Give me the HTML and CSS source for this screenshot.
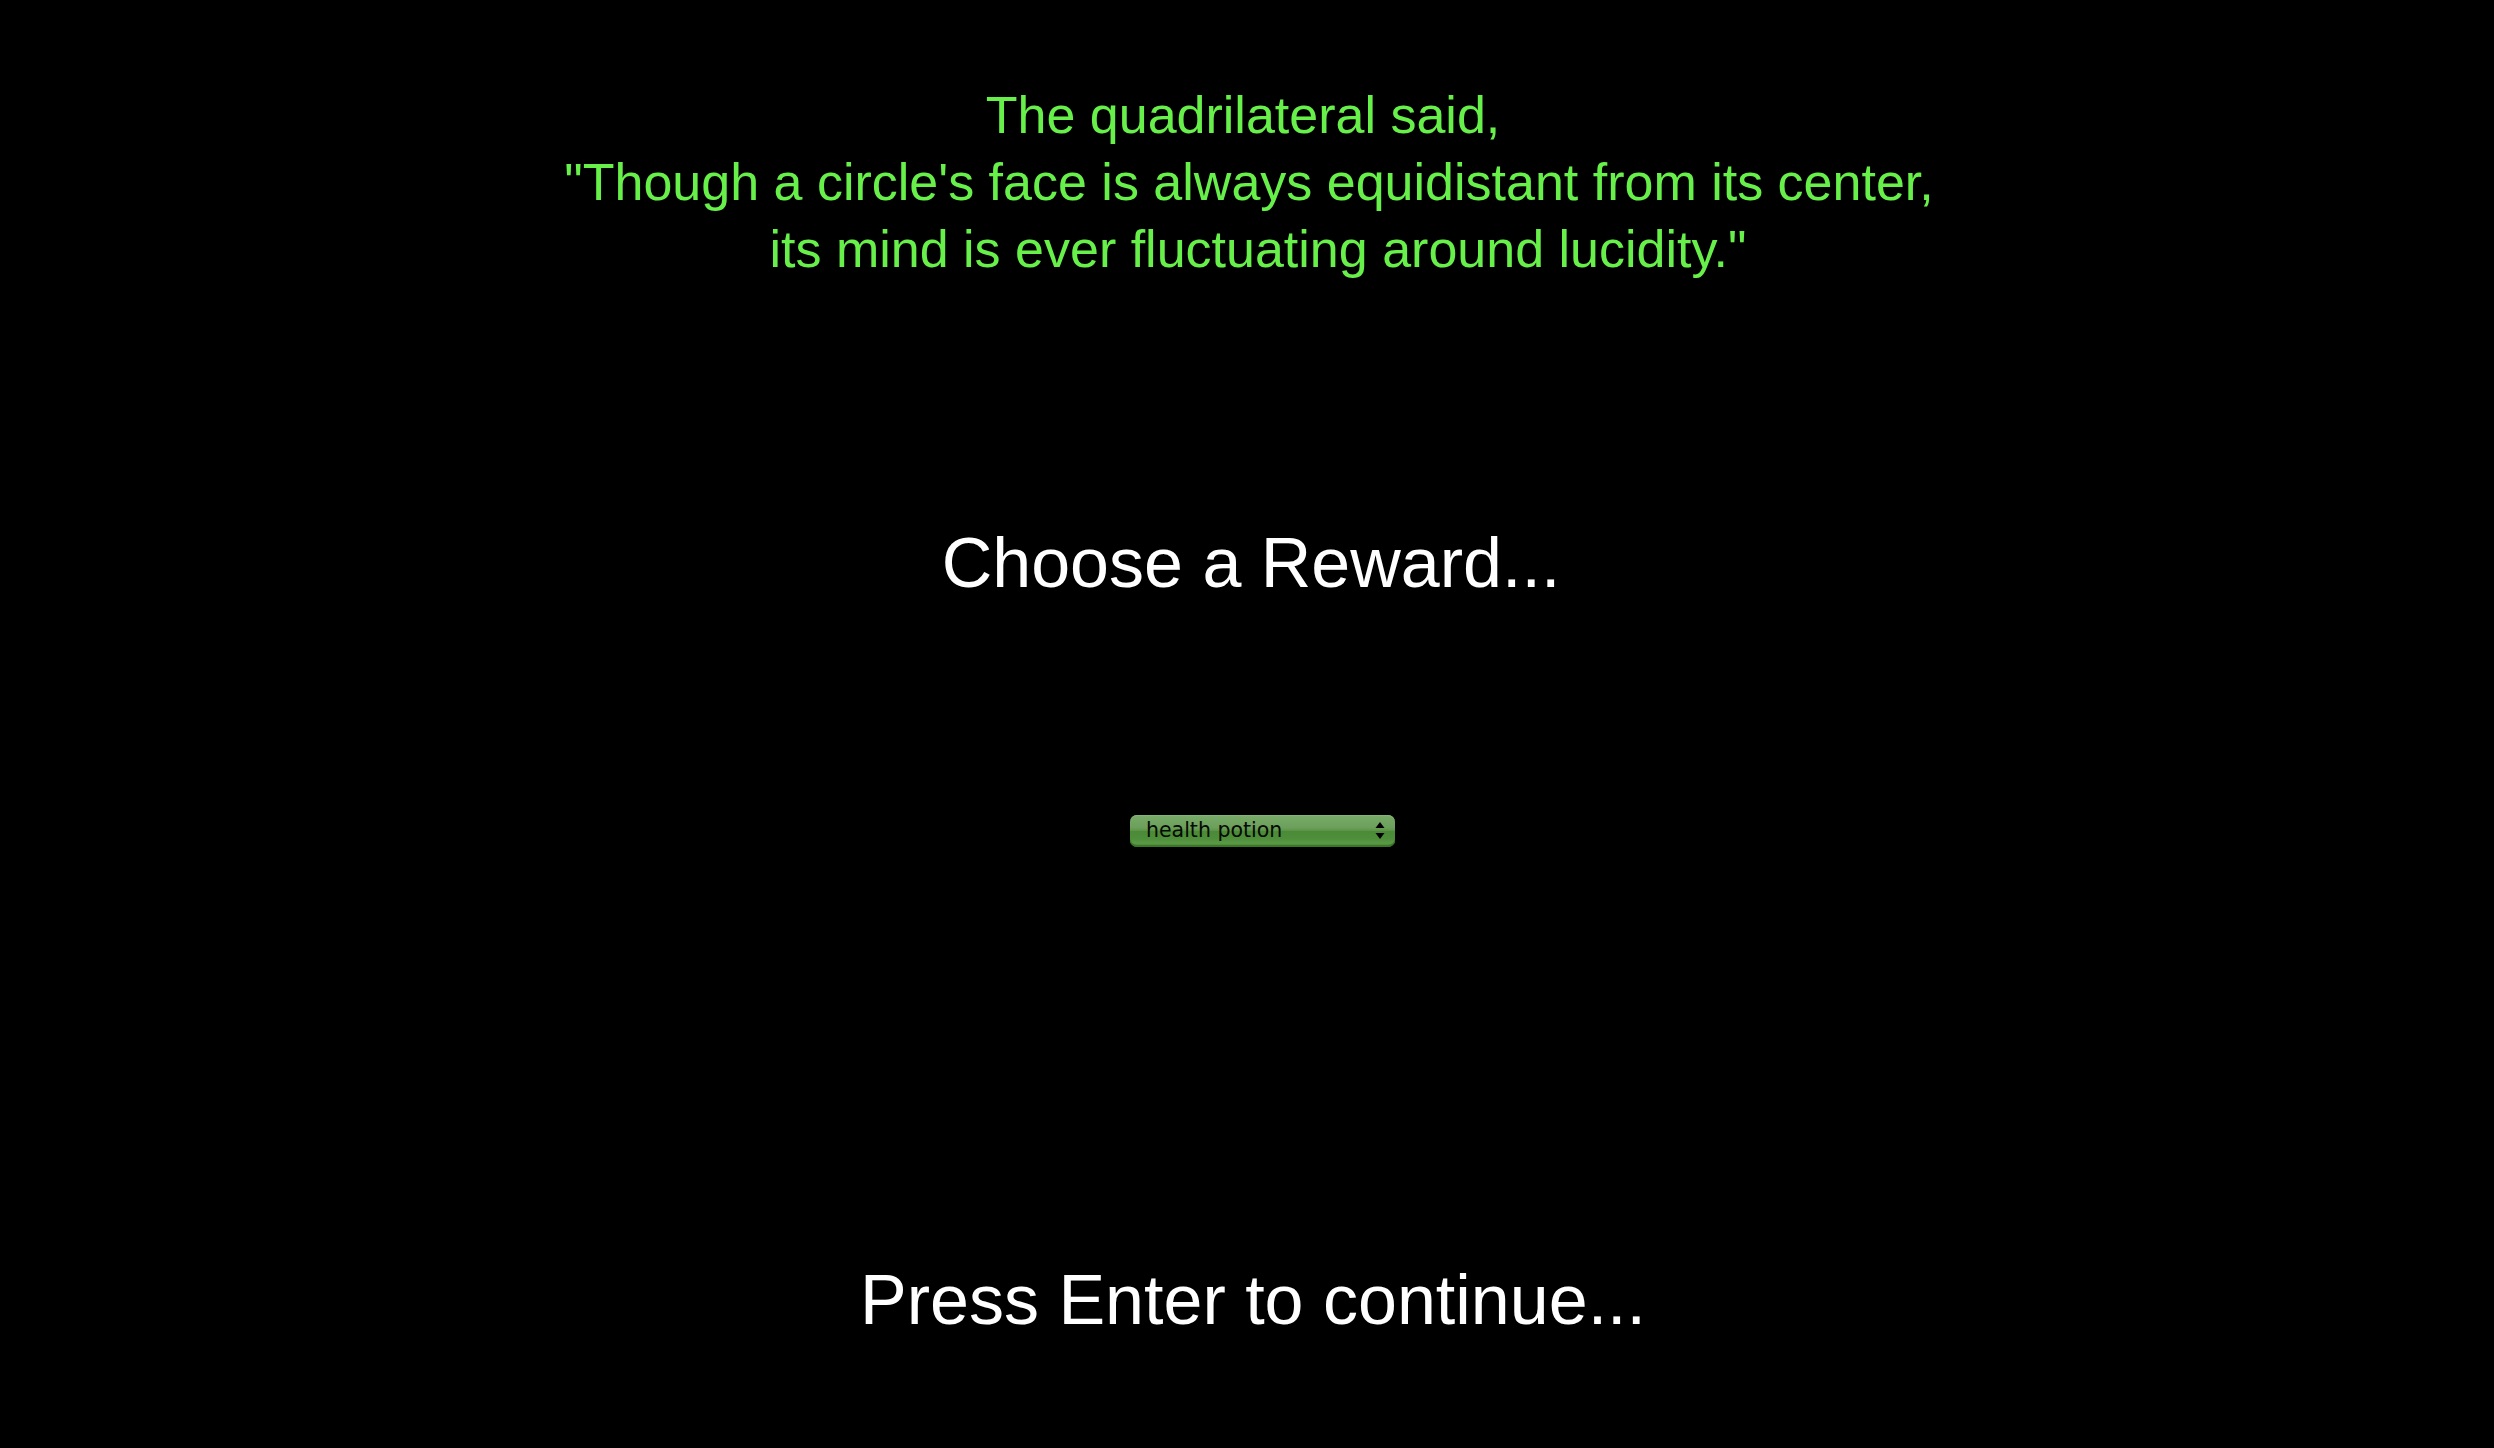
FILE: index.html
```html
<!DOCTYPE html>
<html lang="en">
<head>
<meta charset="utf-8">
<title>Choose a Reward</title>
<link rel="stylesheet" href="styles.css">
</head>
<body>
<main class="screen">
  <p class="quote"><span class="line line-1">The quadrilateral said,</span><br><span class="line">"Though a circle's face is always equidistant from its center,</span><br><span class="line line-3">its mind is ever fluctuating around lucidity."</span></p>
  <h1 class="heading">Choose a Reward...</h1>
  <div class="picker">
    <span class="picker-label">health potion</span>
    <svg class="picker-arrows" width="10" height="18" viewBox="0 0 10 18" aria-hidden="true">
      <polygon points="5,0 9.5,6 0.5,6" fill="#000"/>
      <polygon points="0.5,11 9.5,11 5,17" fill="#000"/>
    </svg>
  </div>
  <p class="prompt">Press Enter to continue...</p>
</main>
</body>
</html>
```

FILE: styles.css
```css
html, body {
  margin: 0;
  padding: 0;
  background: #000;
  height: 100%;
}

.screen {
  display: flex;
  flex-direction: column;
  align-items: center;
  padding-top: 82px;
  font-family: "Liberation Sans", Arial, Helvetica, sans-serif;
}

.quote {
  margin: 0;
  color: #68f04a;
  font-size: 52px;
  line-height: 67px;
  text-align: center;
  transform: translateX(2px);
}

.line {
  display: inline-block;
}

.line-1 {
  transform: translateX(-6px);
}

.line-3 {
  transform: translateX(9px);
}

.heading {
  margin: 240px 0 0;
  color: #fff;
  font-weight: normal;
  font-size: 70px;
  line-height: 80px;
  transform: translateX(4px);
}

.picker {
  margin: 212px 0 0 31px;
  box-sizing: border-box;
  width: 265px;
  height: 32px;
  border-radius: 7px;
  display: flex;
  align-items: center;
  justify-content: space-between;
  padding: 0 10px 0 16px;
  background:
    linear-gradient(to bottom,
      #7aab69 0%,
      #6b9f5a 40%,
      #5a9446 50%,
      #4b8a36 51%,
      #4f8f3b 75%,
      #5a9a47 88%,
      #3e7d29 100%);
  box-shadow: inset 0 -2px 0 #3a7626, inset 0 1px 0 #86b476;
}

.picker-label {
  font-family: "DejaVu Sans", "Lucida Grande", sans-serif;
  font-size: 20.5px;
  line-height: 20px;
  color: #050a03;
  transform: translateY(-1px);
}

.picker-arrows {
  display: block;
}

.prompt {
  margin: 413px 0 0;
  color: #fff;
  font-size: 70px;
  line-height: 80px;
  transform: translateX(6px);
}
```
